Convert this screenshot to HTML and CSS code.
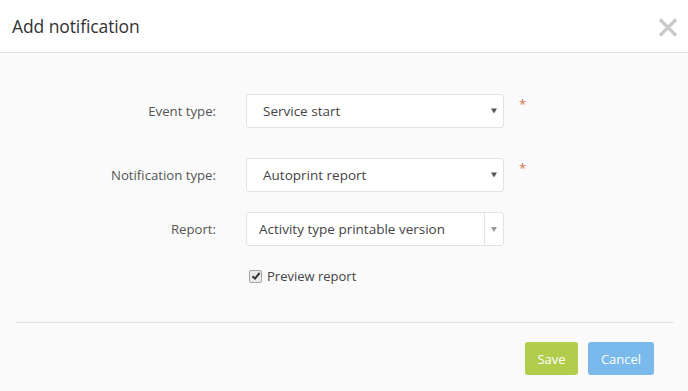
FILE: index.html
```html
<!DOCTYPE html>
<html lang="en">
<head>
  <meta charset="UTF-8" />
  <meta name="viewport" content="width=device-width, initial-scale=1" />
  <title>Add notification</title>
  <link rel="stylesheet" href="styles.css">
</head>
<body>

  <div class="modal">
    <div class="modal-header">
      <h1>Add notification</h1>
      <button class="close" type="button" aria-label="Close">
        <svg width="20" height="19" viewBox="0 0 20 19">
          <path d="M2 1.5 L18 17.5 M18 1.5 L2 17.5" stroke="#c9c9c9" stroke-width="3.2" />
        </svg>
      </button>
    </div>

    <div class="modal-body">
      <div class="form-row">
        <label>Event type:</label>
        <div class="select">
          <span class="value">Service start</span>
          <svg class="arrow" width="6" height="6" viewBox="0 0 6 6"><path d="M0 0.5 H6 L3 5.5 Z" fill="#555" /></svg>
        </div>
        <span class="required">*</span>
      </div>

      <div class="form-row">
        <label>Notification type:</label>
        <div class="select">
          <span class="value">Autoprint report</span>
          <svg class="arrow" width="6" height="6" viewBox="0 0 6 6"><path d="M0 0.5 H6 L3 5.5 Z" fill="#555" /></svg>
        </div>
        <span class="required">*</span>
      </div>

      <div class="form-row report-row">
        <label>Report:</label>
        <div class="select combo">
          <span class="value">Activity type printable version</span>
          <span class="combo-btn">
            <svg width="6" height="5" viewBox="0 0 6 5"><path d="M0 0 H6 L3 5 Z" fill="#999" /></svg>
          </span>
        </div>
      </div>

      <div class="check-row">
        <span class="checkbox">
          <svg width="10" height="10" viewBox="0 0 10 10">
            <path d="M1.5 5.2 L4 7.6 L8.6 2" fill="none" stroke="#333" stroke-width="2" />
          </svg>
        </span>
        <span>Preview report</span>
      </div>
    </div>

    <div class="modal-footer">
      <button class="btn btn-save" type="button">Save</button>
      <button class="btn btn-cancel" type="button">Cancel</button>
    </div>
  </div>

</body>
</html>
```

FILE: styles.css
```css
body {
  margin: 0;
  font-family: 'Open Sans', sans-serif;
  color: #444;
  background: #fafafa;
}
.modal {
  width: 688px;
  height: 391px;
  background: #fafafa;
}
.modal-header {
  height: 52px;
  background: white;
  border-bottom: 1px solid #e3e3e3;
  display: flex;
  align-items: center;
  justify-content: space-between;
  padding: 0 10px 0 12px;
}
.modal-header h1 {
  margin: 0;
  font-size: 17.5px;
  font-weight: normal;
  color: #333;
  letter-spacing: -0.1px;
}
.close {
  background: none;
  border: none;
  padding: 0;
  display: flex;
  margin-top: 2px;
}
.modal-body {
  padding: 41px 0 0;
}
.form-row {
  display: grid;
  grid-template-columns: 216px 258px 30px;
  column-gap: 30px;
  align-items: center;
  margin-bottom: 30px;
}
.form-row label {
  text-align: right;
  font-size: 13.2px;
  color: #555;
}
.select {
  height: 32px;
  background: white;
  border: 1px solid #e2e2e2;
  border-radius: 3px;
  display: flex;
  align-items: center;
  justify-content: space-between;
  padding: 0 6px 0 16px;
  font-size: 13.5px;
  color: #444;
}
.required {
  align-self: start;
  margin-left: -15px;
  margin-top: 1px;
  color: #d9764f;
  font-size: 13px;
}
.report-row {
  margin-top: -10px;
  margin-bottom: 0;
}
.combo {
  padding: 0 0 0 12px;
}
.combo-btn {
  width: 18px;
  height: 100%;
  border-left: 1px solid #e2e2e2;
  display: flex;
  align-items: center;
  justify-content: center;
}
.check-row {
  display: flex;
  align-items: center;
  gap: 5px;
  margin: 21px 0 0 249px;
  font-size: 13px;
  color: #444;
}
.checkbox {
  width: 11px;
  height: 11px;
  border: 1px solid #a6a6a6;
  border-radius: 2px;
  background: #e9e9e9;
  display: flex;
  align-items: center;
  justify-content: center;
}
.modal-footer {
  margin: 37px 14px 0 16px;
  border-top: 1px solid #e2e2e2;
  display: flex;
  justify-content: flex-end;
  gap: 10px;
  padding: 19px 20px 0 0;
}
.btn {
  height: 33px;
  border: none;
  border-radius: 3px;
  color: white;
  font-family: 'Open Sans', sans-serif;
  font-size: 13px;
  padding: 0 12px;
}
.btn-save {
  background: #b1cd4b;
  width: 53px;
}
.btn-cancel {
  background: #7ab9ec;
  width: 66px;
}
```
